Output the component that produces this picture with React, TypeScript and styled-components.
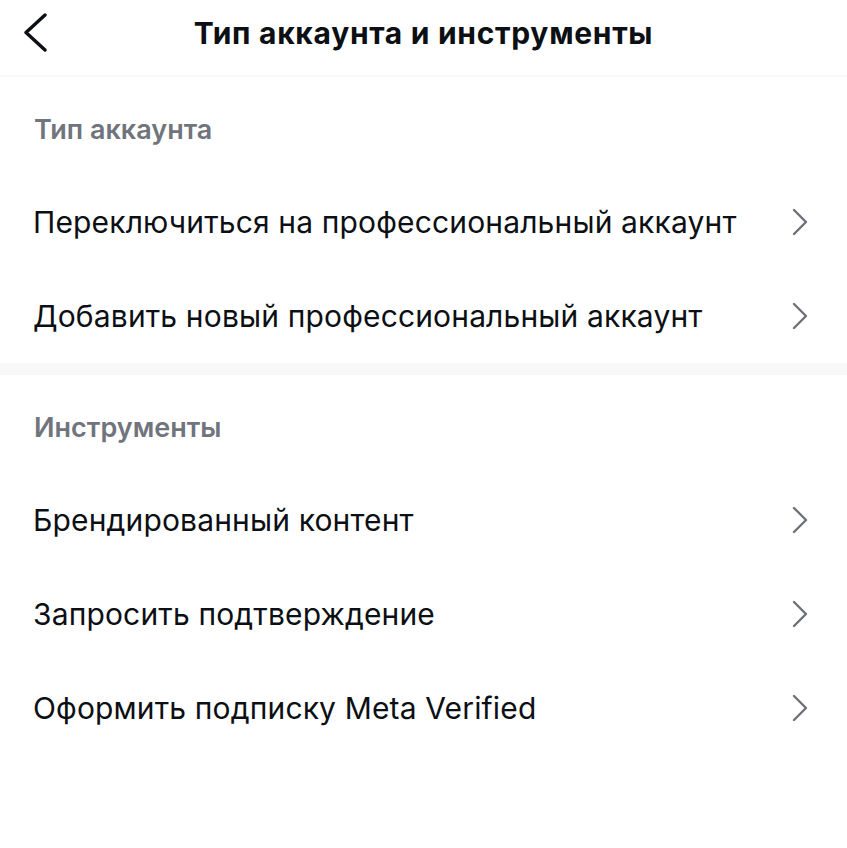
import React from "react";
import styled, { createGlobalStyle } from "styled-components";

const Global = createGlobalStyle`
  html, body { margin: 0; padding: 0; background: #ffffff; }
  body { font-family: Inter, "Noto Sans", sans-serif; -webkit-font-smoothing: antialiased; }
  * { box-sizing: border-box; }
`;

const Screen = styled.div`
  width: 847px;
  min-height: 848px;
  background: #ffffff;
  display: flex;
  flex-direction: column;
`;

const Header = styled.header`
  height: 77px;
  border-bottom: 2px solid #f8f8f8;
  display: grid;
  grid-template-columns: 80px 1fr 80px;
  align-items: center;
  padding-bottom: 10px;
`;

const BackButton = styled.button`
  border: none;
  background: none;
  padding: 0 0 0 21px;
  margin: 0;
  display: flex;
  align-items: center;
  cursor: pointer;
`;

const Title = styled.h1`
  margin: 0;
  text-align: center;
  font-family: Inter, sans-serif;
  font-weight: 700;
  font-size: 30px;
  letter-spacing: 0.7px;
  color: #0c0f14;
  line-height: 36px;
`;

const Section = styled.section`
  padding-top: 36px;
`;

const SectionTitle = styled.h2`
  margin: 0 0 28px 0;
  padding: 0 34px;
  font-family: Inter, sans-serif;
  font-weight: 600;
  font-size: 27px;
  line-height: 34px;
  color: #70747c;
`;

const Row = styled.div`
  height: 94px;
  display: flex;
  align-items: center;
  justify-content: space-between;
  padding: 0 38px 0 33px;
  cursor: pointer;
`;

const RowLabel = styled.span`
  font-family: Inter, sans-serif;
  font-weight: 400;
  font-size: 30px;
  letter-spacing: 0.15px;
  color: #0c0f14;
`;

const Band = styled.div`
  height: 12px;
  background: #f8f8f8;
`;

const BackIcon = () => (
  <svg width="28" height="40" viewBox="0 0 28 40" fill="none">
    <path d="M24 2 L5 19.5 L24 37" stroke="#0c0f14" strokeWidth="3.4" strokeLinecap="round" strokeLinejoin="round" />
  </svg>
);

const Chevron = () => (
  <svg width="18" height="30" viewBox="0 0 18 30" fill="none">
    <path d="M3 3 L15 15 L3 27" stroke="#6e7178" strokeWidth="2.4" strokeLinecap="round" strokeLinejoin="round" />
  </svg>
);

const sections = [
  {
    title: "Тип аккаунта",
    items: ["Переключиться на профессиональный аккаунт", "Добавить новый профессиональный аккаунт"],
  },
  {
    title: "Инструменты",
    items: ["Брендированный контент", "Запросить подтверждение", "Оформить подписку Meta Verified"],
  },
];

export default function App() {
  return (
    <Screen>
      <Global />
      <Header>
        <BackButton aria-label="Назад">
          <BackIcon />
        </BackButton>
        <Title>Тип аккаунта и инструменты</Title>
        <div />
      </Header>
      {sections.map((s, i) => (
        <React.Fragment key={s.title}>
          {i > 0 && <Band />}
          <Section>
            <SectionTitle>{s.title}</SectionTitle>
            {s.items.map((it) => (
              <Row key={it}>
                <RowLabel>{it}</RowLabel>
                <Chevron />
              </Row>
            ))}
          </Section>
        </React.Fragment>
      ))}
    </Screen>
  );
}
